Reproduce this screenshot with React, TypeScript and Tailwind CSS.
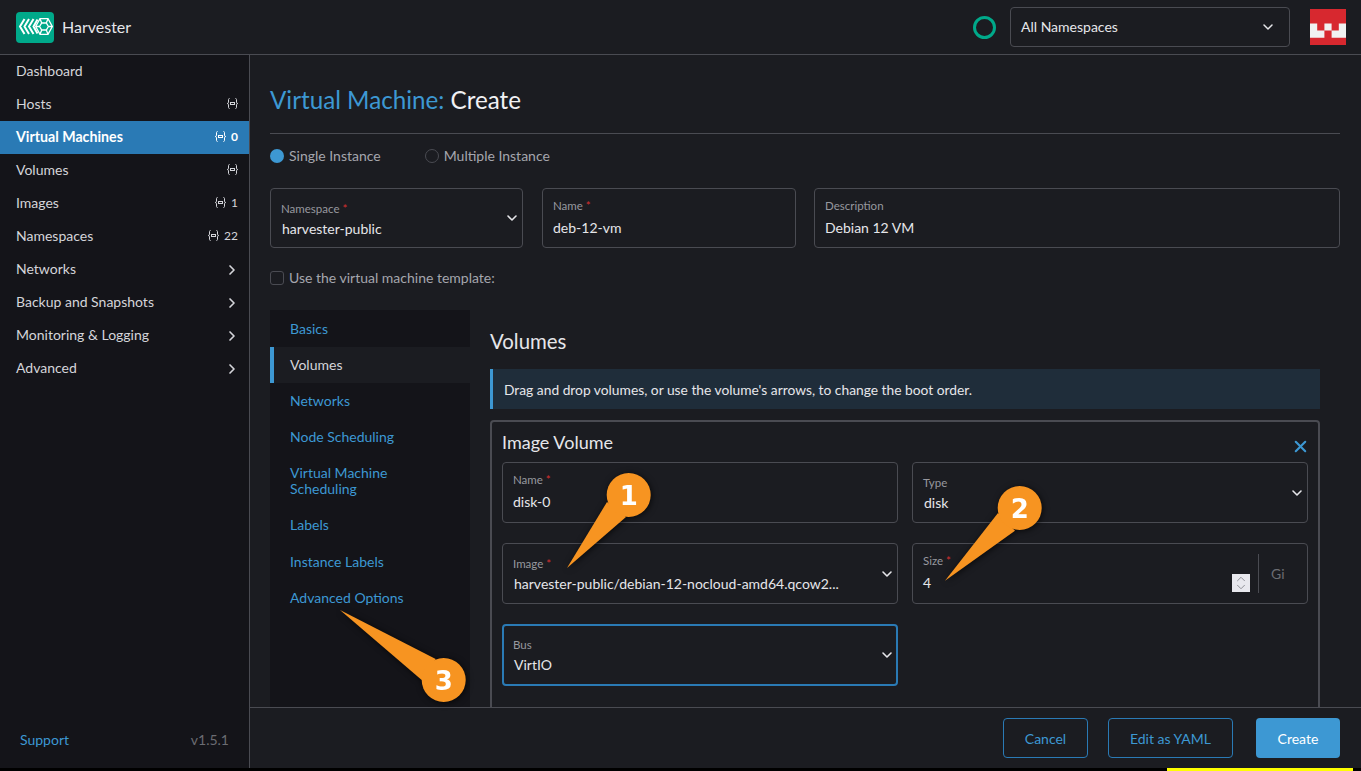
import { ChevronDown, ChevronRight, ChevronUp, X } from 'lucide-react'

const font = { fontFamily: 'Lato, "Liberation Sans", sans-serif' }

function NsIcon() {
  return (
    <svg width="11" height="11" viewBox="0 0 11 11" fill="none" stroke="currentColor" strokeWidth="1">
      <path d="M2.5 .5C1.5 .5 1.5 1.2 1.5 2V4.2C1.5 5 1 5.5 .3 5.5C1 5.5 1.5 6 1.5 6.8V9C1.5 9.8 1.5 10.5 2.5 10.5" />
      <path d="M8.5 .5C9.5 .5 9.5 1.2 9.5 2V4.2C9.5 5 10 5.5 10.7 5.5C10 5.5 9.5 6 9.5 6.8V9C9.5 9.8 9.5 10.5 8.5 10.5" />
      <rect x="3.5" y="4.5" width="4" height="2" />
    </svg>
  )
}

function NavItem({ label, count, ns, arrow, active }: { label: string; count?: string; ns?: boolean; arrow?: boolean; active?: boolean }) {
  return (
    <div className={`h-[33px] pl-4 pr-[11px] pb-[2px] flex items-center justify-between ${active ? 'bg-[#2a7ab5] text-white font-bold text-[14.2px]' : 'text-sm text-[#d4d5da]'}`}>
      <span>{label}</span>
      <span className="flex items-center gap-[5px] text-xs">
        {ns && <NsIcon />}
        {count && <span>{count}</span>}
        {arrow && <ChevronRight size={16} strokeWidth={2.5} className="-mr-[2px] mt-[2px]" />}
      </span>
    </div>
  )
}

function Field({ label, value, required, select, focus, className }: { label: string; value: string; required?: boolean; select?: boolean; focus?: boolean; className?: string }) {
  const frame = focus ? 'border-2 border-[#2a7ab5] px-[9px] pt-[12px]' : `border border-[#4a4b52] px-[10px] ${select ? 'pt-[13px]' : 'pt-[10px]'}`
  return (
    <div className={`relative rounded ${frame} ${className ?? ''}`}>
      <div className="text-[11.5px] leading-[14px] text-[#97989f]">
        {label}
        {required && <span className="text-[#d32f2f] ml-[3px]">*</span>}
      </div>
      <div className={`text-sm leading-5 text-[#e6e6ea] whitespace-nowrap ${select ? 'mt-[3px] pl-[1px]' : 'mt-[5px]'}`}>{value}</div>
      {select && (
        <ChevronDown
          size={16}
          strokeWidth={2.4}
          className={`absolute top-1/2 -translate-y-1/2 text-[#e6e6ea] ${focus ? 'right-[1px]' : 'right-[2px]'}`}
        />
      )}
    </div>
  )
}

const tabs = ['Basics', 'Volumes', 'Networks', 'Node Scheduling', 'Virtual Machine Scheduling', 'Labels', 'Instance Labels', 'Advanced Options']

function Callouts() {
  const items = [
    { n: '1', c: [628.7, 495], p: 'M567 568L607 502L626 517Z' },
    { n: '2', c: [1019.7, 508], p: 'M945 580.7L998 513L1015 530.7Z' },
    { n: '3', c: [443.7, 680], p: 'M340 610L435.7 659L421.7 680Z' },
  ]
  return (
    <svg className="absolute inset-0 pointer-events-none drop-shadow-[1px_1px_3px_rgba(0,0,0,0.7)]" width="1361" height="771">
      {items.map((i) => (
        <g key={i.n}>
          <path d={i.p} fill="#f79421" />
          <circle cx={i.c[0]} cy={i.c[1]} r="22" fill="#f79421" />
          <text x={i.c[0]} y={i.c[1] + 9.5} textAnchor="middle" fontSize="26" fontWeight="700" fill="#fff" fontFamily="DejaVu Sans, sans-serif">
            {i.n}
          </text>
        </g>
      ))}
    </svg>
  )
}

export default function App() {
  return (
    <div className="relative w-[1361px] h-[771px] bg-black overflow-hidden" style={font}>
      <div className="h-[768px] flex flex-col bg-[#1b1c21]">
        <header className="h-[55px] shrink-0 border-b border-[#4a4b52] flex items-center pl-4 pr-[15px]">
          <svg width="38" height="31" viewBox="0 0 38 31" className="shrink-0">
            <rect width="38" height="31" rx="4" fill="#00a98a" />
            <g fill="none" stroke="#fff">
              <path strokeWidth="2" d="M8.5 7L4 14.5L8.5 22M13 7L8.5 14.5L13 22M17.5 7L13 14.5L17.5 22M21.5 7.5L17.5 14.5L21.5 21.5" />
              <g strokeWidth="1.3">
                <path d="M24 6.7H32L36.3 14.5L32 22.3H24L19.7 14.5Z" />
                <path d="M25.7 11H30.3L32.4 14.5L30.3 18H25.7L23.6 14.5Z" />
                <path d="M24 6.7L25.7 11M32 6.7L30.3 11M36.3 14.5H32.4M32 22.3L30.3 18M24 22.3L25.7 18M19.7 14.5H23.6" />
              </g>
            </g>
          </svg>
          <span className="ml-2 text-base text-[#e6e6ea]">Harvester</span>
          <span className="ml-auto w-[23px] h-[23px] rounded-full border-[3px] border-[#00a98a]" />
          <div className="ml-[14px] w-[280px] h-10 rounded border border-[#4a4b52] flex items-center justify-between pl-[10px] pr-[13px] text-sm text-[#e6e6ea]">
            <span>All Namespaces</span>
            <ChevronDown size={16} strokeWidth={2.2} />
          </div>
          <svg width="36" height="36" viewBox="0 0 36 36" className="ml-[20px] block">
            <rect width="36" height="36" fill="#d7282f" />
            <path d="M0 14.4H7.2V21.6H14.4V28.8H0ZM14.4 14.4H21.6V21.6H14.4ZM28.8 14.4H36V28.8H21.6V21.6H28.8Z" fill="#f1f1f1" />
          </svg>
        </header>
        <div className="flex-1 min-h-0 flex">
          <aside className="w-[250px] shrink-0 bg-[#141419] border-r border-[#4a4b52] flex flex-col">
            <NavItem label="Dashboard" />
            <NavItem label="Hosts" ns />
            <NavItem label="Virtual Machines" ns count="0" active />
            <NavItem label="Volumes" ns />
            <NavItem label="Images" ns count="1" />
            <NavItem label="Namespaces" ns count="22" />
            <NavItem label="Networks" arrow />
            <NavItem label="Backup and Snapshots" arrow />
            <NavItem label="Monitoring &amp; Logging" arrow />
            <NavItem label="Advanced" arrow />
            <div className="mt-auto h-[56px] pl-5 pr-5 flex items-center justify-between text-sm">
              <span className="text-[#3d98d3]">Support</span>
              <span className="text-[#6b6c72]">v1.5.1</span>
            </div>
          </aside>
          <main className="flex-1 min-w-0 flex flex-col">
            <div className="flex-1 min-h-0 overflow-hidden pl-5 pr-[21px] pt-[26px]">
              <h1 className="text-[24.2px] leading-[37px] pb-4 border-b border-[#4a4b52] h-[53px]">
                <span className="text-[#3d98d3]">Virtual Machine:</span> <span className="text-[#f1f1f4]">Create</span>
              </h1>
              <div className="mt-[12px] h-5 flex items-center text-sm text-[#a5a6ad]">
                <span className="w-[14px] h-[14px] rounded-full bg-[#3d98d3]" />
                <span className="ml-[5px]">Single Instance</span>
                <span className="ml-[44px] w-[14px] h-[14px] rounded-full border border-[#4a4b52]" />
                <span className="ml-[5px]">Multiple Instance</span>
              </div>
              <div className="mt-[22px] flex h-[60px]">
                <Field label="Namespace" value="harvester-public" required select className="w-[253px]" />
                <Field label="Name" value="deb-12-vm" required className="ml-[19px] w-[254px]" />
                <Field label="Description" value="Debian 12 VM" className="ml-[18px] flex-1" />
              </div>
              <div className="mt-5 h-5 flex items-center text-sm text-[#a5a6ad]">
                <span className="w-[14px] h-[14px] rounded-[3px] border border-[#4a4b52]" />
                <span className="ml-[5px]">Use the virtual machine template:</span>
              </div>
              <div className="mt-[22px] flex h-[500px]">
                <nav className="w-[200px] shrink-0 bg-[#141419] pt-px text-sm leading-4 text-[#3d98d3]">
                  {tabs.map((t) => (
                    <div
                      key={t}
                      className={`py-[10px] pr-[30px] ${t === 'Volumes' ? 'border-l-4 border-[#3d98d3] pl-4 bg-[#1b1c21] text-[#d4d5da]' : 'pl-5'} ${t === 'Labels' ? 'pb-[11px]' : ''}`}
                    >
                      {t}
                    </div>
                  ))}
                </nav>
                <section className="flex-1 min-w-0 px-5 pt-[17px]">
                  <h2 className="text-[20.4px] leading-7 text-[#e6e6ea]">Volumes</h2>
                  <div className="mt-[14px] h-10 border-l-[3px] border-[#3d98d3] bg-[#1f2d3a] pl-[11px] pt-[2px] flex items-center text-[13.8px] text-[#e6e6ea]">
                    Drag and drop volumes, or use the volume&apos;s arrows, to change the boot order.
                  </div>
                  <div className="relative mt-[11px] h-[320px] rounded border-2 border-[#4a4b52] px-[10px]">
                    <h3 className="mt-[9px] text-lg leading-[22px] text-[#e6e6ea]">Image Volume</h3>
                    <X size={19} strokeWidth={2.6} className="absolute right-[8px] top-[15px] text-[#3d98d3]" />
                    <div className="mt-[9px] grid grid-cols-[396px_396px] gap-x-[14px] gap-y-5">
                      <Field label="Name" value="disk-0" required className="h-[61px]" />
                      <Field label="Type" value="disk" select className="h-[61px]" />
                      <Field label="Image" value="harvester-public/debian-12-nocloud-amd64.qcow2..." required select className="h-[61px]" />
                      <div className="relative h-[61px] rounded border border-[#4a4b52] px-[10px] pt-[10px]">
                        <div className="text-[11.5px] leading-[14px] text-[#97989f]">
                          Size<span className="text-[#d32f2f] ml-[3px]">*</span>
                        </div>
                        <div className="mt-[5px] text-sm leading-5 text-[#e6e6ea]">4</div>
                        <div className="absolute left-[319px] top-[30px] w-[18px] h-[18px] bg-[#e8e8ee] flex flex-col items-center justify-center text-[#8f9097]">
                          <ChevronUp size={14} strokeWidth={1.7} className="-mb-[6px] shrink-0" />
                          <ChevronDown size={14} strokeWidth={1.7} className="shrink-0" />
                        </div>
                        <div className="absolute left-[345px] top-[10px] h-[39px] w-px bg-[#4a4b52]" />
                        <span className="absolute left-[358px] top-[20px] text-sm leading-5 text-[#6b6c72]">Gi</span>
                      </div>
                      <Field label="Bus" value="VirtIO" select focus className="h-[62px]" />
                    </div>
                  </div>
                </section>
              </div>
            </div>
            <footer className="h-[61px] shrink-0 border-t border-[#4a4b52] flex items-center justify-end gap-5 pl-5 pr-[21px] text-sm">
              <button className="w-[85px] h-10 pt-px rounded border border-[#2a7ab5] text-[#3d98d3]">Cancel</button>
              <button className="w-[125px] h-10 pt-px rounded border border-[#2a7ab5] text-[#3d98d3]">Edit as YAML</button>
              <button className="ml-[3px] w-[84px] h-10 pt-px rounded bg-[#3d98d3] text-white">Create</button>
            </footer>
          </main>
        </div>
      </div>
      <div className="h-[3px] flex justify-end pr-2">
        <div className="w-[186px] bg-[#ffff00]" />
      </div>
      <Callouts />
    </div>
  )
}
